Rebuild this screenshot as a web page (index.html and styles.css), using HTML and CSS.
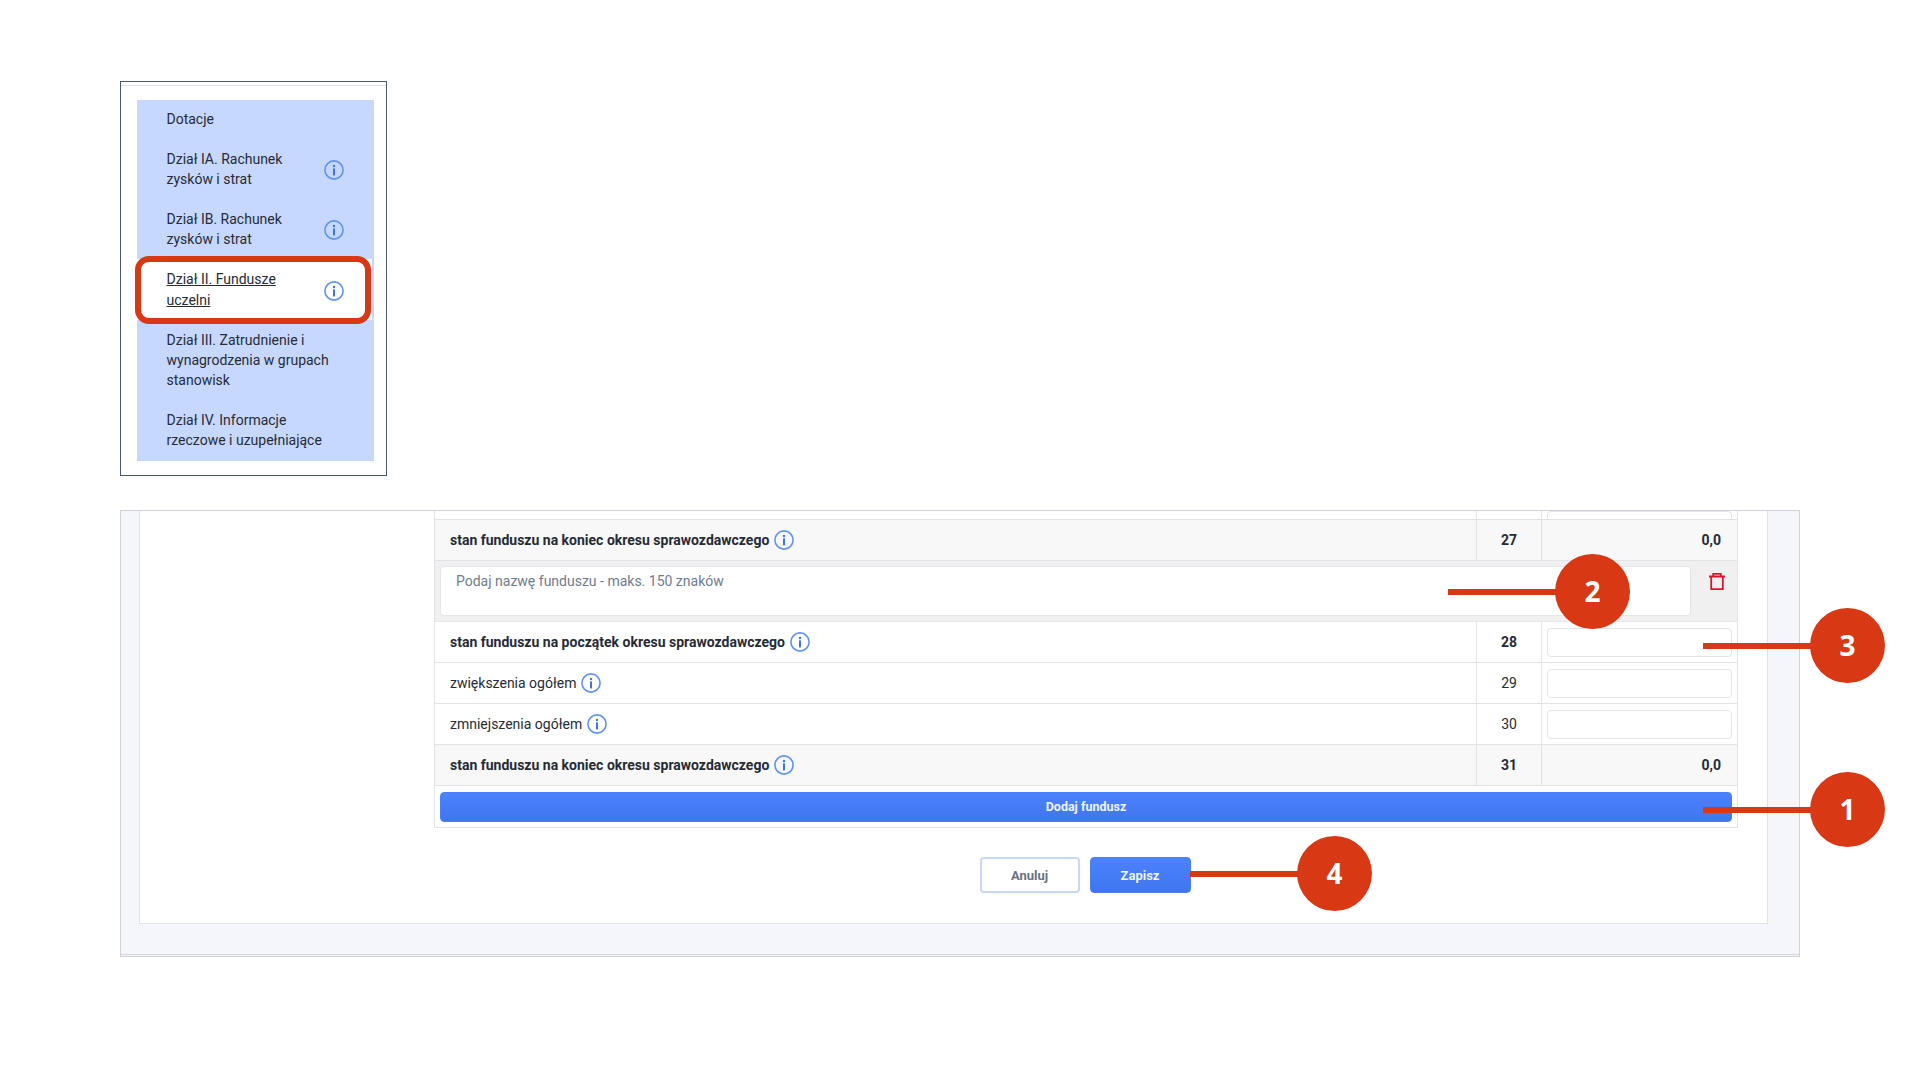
FILE: index.html
```html
<!DOCTYPE html>
<html lang="pl">
<head>
<meta charset="utf-8">
<title>Dział II. Fundusze uczelni</title>
<link rel="stylesheet" href="styles.css">
</head>
<body>
<svg class="defs" width="0" height="0" aria-hidden="true">
  <symbol id="info" viewBox="0 0 20 20">
    <circle cx="10" cy="10" r="9.1" fill="none" stroke="#5f93f5" stroke-width="1.6"/>
    <circle cx="10" cy="6" r="1.2" fill="#3a74e8"/>
    <rect x="9" y="8.4" width="2" height="7" fill="#3a74e8"/>
  </symbol>
</svg>

<main class="page">
  <nav class="menu-panel">
    <ul class="menu">
      <li class="menu-item first"><span>Dotacje</span></li>
      <li class="menu-item"><span>Dział IA. Rachunek<br>zysków i strat</span><svg class="info"><use href="#info"/></svg></li>
      <li class="menu-item"><span>Dział IB. Rachunek<br>zysków i strat</span><svg class="info"><use href="#info"/></svg></li>
      <li class="menu-item active"><span><u>Dział II. Fundusze<br>uczelni</u></span><svg class="info"><use href="#info"/></svg></li>
      <li class="menu-item"><span>Dział III. Zatrudnienie i<br>wynagrodzenia w grupach<br>stanowisk</span></li>
      <li class="menu-item"><span>Dział IV. Informacje<br>rzeczowe i uzupełniające</span></li>
    </ul>
  </nav>

  <section class="main-panel">
    <div class="card">
      <div class="table">
        <div class="row partial">
          <div class="cell label"></div>
          <div class="cell num"></div>
          <div class="cell val"><input class="field" type="text" aria-label="26"></div>
        </div>
        <div class="row total">
          <div class="cell label"><b>stan funduszu na koniec okresu sprawozdawczego</b><svg class="info"><use href="#info"/></svg></div>
          <div class="cell num"><b>27</b></div>
          <div class="cell val"><b>0,0</b></div>
        </div>
        <div class="name-row">
          <textarea class="name-input" placeholder="Podaj nazwę funduszu - maks. 150 znaków"></textarea>
          <svg class="trash" viewBox="0 0 16 17" width="16" height="17" aria-label="Usuń">
            <path d="M0 3.5h16M4.2 3.5V.9h7.6v2.6M2.2 3.5v12.6h11.6V3.5" fill="none" stroke="#d9162b" stroke-width="1.8"/>
          </svg>
        </div>
        <div class="row">
          <div class="cell label"><b>stan funduszu na początek okresu sprawozdawczego</b><svg class="info"><use href="#info"/></svg></div>
          <div class="cell num"><b>28</b></div>
          <div class="cell val"><input class="field" type="text" aria-label="28"></div>
        </div>
        <div class="row">
          <div class="cell label">zwiększenia ogółem<svg class="info"><use href="#info"/></svg></div>
          <div class="cell num">29</div>
          <div class="cell val"><input class="field" type="text" aria-label="29"></div>
        </div>
        <div class="row">
          <div class="cell label">zmniejszenia ogółem<svg class="info"><use href="#info"/></svg></div>
          <div class="cell num">30</div>
          <div class="cell val"><input class="field" type="text" aria-label="30"></div>
        </div>
        <div class="row total">
          <div class="cell label"><b>stan funduszu na koniec okresu sprawozdawczego</b><svg class="info"><use href="#info"/></svg></div>
          <div class="cell num"><b>31</b></div>
          <div class="cell val"><b>0,0</b></div>
        </div>
        <div class="add-row"><button class="btn primary wide" type="button">Dodaj fundusz</button></div>
      </div>
      <div class="actions">
        <button class="btn ghost" type="button">Anuluj</button>
        <button class="btn primary" type="button">Zapisz</button>
      </div>
    </div>
    <div class="panel-foot"></div>
  </section>
</main>

<div class="callout c1"><i class="wire"></i><span class="dot">1</span></div>
<div class="callout c2"><i class="wire"></i><span class="dot">2</span></div>
<div class="callout c3"><i class="wire"></i><span class="dot">3</span></div>
<div class="callout c4"><i class="wire"></i><span class="dot">4</span></div>
</body>
</html>
```
FILE: styles.css
```css
* { box-sizing: border-box; }
html, body { margin: 0; height: 100%; }
body {
  position: relative;
  background: #fff;
  color: #262b36;
  font: 14px/20px Roboto, "Liberation Sans", sans-serif;
  overflow: hidden;
}
.defs { position: absolute; }
.page { padding: 81px 120px 0; display: flex; flex-direction: column; }

/* side menu */
.menu-panel {
  width: 267px;
  height: 395px;
  border: 1px solid #4a5670;
  background: linear-gradient(#dfe1ea, #dfe1ea) 0 3px / 100% 1px no-repeat;
  padding: 18px 12px 0 16px;
}
.menu { list-style: none; margin: 0; padding: 0 0 1px; background: #c6d8fd; }
.menu-item {
  position: relative;
  display: flex;
  align-items: center;
  justify-content: space-between;
  padding: 10px 30px 10px 29.5px;
  line-height: 20.1px;
}
.menu-item.first { padding-top: 8.5px; padding-bottom: 10.5px; }
.menu-item .info { margin-top: 2px; }
.menu-item.active { background: #fff; margin-right: 2px; padding-right: 28px; }
.menu-item.active .info { margin-top: 2px; }
.menu-item.active::after {
  content: "";
  position: absolute;
  inset: -3px 1px -4px -2px;
  border: 6px solid #d93815;
  border-radius: 14px;
}
.info { flex: none; width: 20px; height: 20px; }

/* main panel */
.main-panel {
  margin-top: 34px;
  width: 1680px;
  height: 447px;
  background: #f4f6fb;
  border: 1px solid #cfd2d8;
  padding: 0 31px 0 18px;
}
.card {
  height: 413px;
  background: #fff;
  border: 1px solid #e0e2e8;
  border-top: 0;
  padding: 0 29px 0 294px;
}
.panel-foot { height: 31px; border-bottom: 1px solid #d5d7dc; margin: 0 -31px 0 -18px; }

.table { border: 1px solid #e2e3e6; border-top: 0; }
.row {
  display: grid;
  grid-template-columns: 1fr 65px 196px;
  height: 41px;
  border-bottom: 1px solid #e2e3e6;
}
.row.partial { height: 9px; overflow: hidden; }
.row.total { background: #f8f8f8; }
.cell { display: flex; align-items: center; min-width: 0; }
.label { gap: 5px; padding-left: 15px; }
.num { justify-content: center; border-left: 1px solid #e2e3e6; }
.val { justify-content: flex-end; border-left: 1px solid #e2e3e6; padding: 0 16px 0 5px; }
.val:has(.field) { padding: 0 5px; }
b { font-weight: 700; }
.field {
  width: 100%;
  height: 29px;
  flex: none;
  border: 1px solid #e4e5ea;
  border-radius: 4px;
  background: #fff;
}
.partial .val { align-items: flex-end; padding-bottom: 4px; }
.name-row {
  display: flex;
  gap: 18px;
  height: 61px;
  background: #f0f0f0;
  padding: 5px 12px 5px 5px;
  border-bottom: 1px solid #e8e8e8;
}
.name-input {
  flex: 1;
  resize: none;
  border: 1px solid #e4e5ea;
  border-radius: 4px;
  background: #fff;
  padding: 4px 15px;
  font: 14px/20px Roboto, sans-serif;
  outline: 0;
}
.name-input::placeholder { color: #6f7c90; opacity: 1; }
.trash { flex: none; margin-top: 7px; }
.add-row { padding: 6px 5px 5px; height: 41px; }

/* buttons */
.btn {
  font: 700 13px/1 Roboto, sans-serif;
  border-radius: 4px;
  cursor: pointer;
}
.primary {
  color: #eef3ff;
  background: linear-gradient(#4c82ff, #3f75ec);
  border: 1px solid #4a7ff5;
}
.ghost { color: #6a7183; background: #fff; border: 2px solid #c6d8fd; }
.wide { width: 100%; height: 30px; font-size: 12.5px; }
.actions {
  display: flex;
  justify-content: center;
  gap: 10px;
  margin-top: 29px;
  padding-right: 2px;
}
.actions .btn { width: 100px; height: 36px; }
.actions .primary { width: 101px; }

/* numbered callouts laid over the screenshot */
.callout { position: absolute; display: flex; align-items: center; height: 75px; }
.wire { width: var(--w, 110px); height: 6px; background: #d93815; flex: none; }
.dot {
  flex: none;
  width: 75px;
  height: 75px;
  margin-left: -1px;
  border-radius: 50%;
  background: #d93815;
  color: #fff;
  font: 700 28px/75px "Open Sans", "Noto Sans", sans-serif;
  text-align: center;
}
.c1 { left: 1703px; top: 772px; --w: 108px; }
.c2 { left: 1448px; top: 554px; --w: 108px; }
.c3 { left: 1703px; top: 608px; --w: 108px; }
.c4 { left: 1190px; top: 836px; --w: 108px; }
```
